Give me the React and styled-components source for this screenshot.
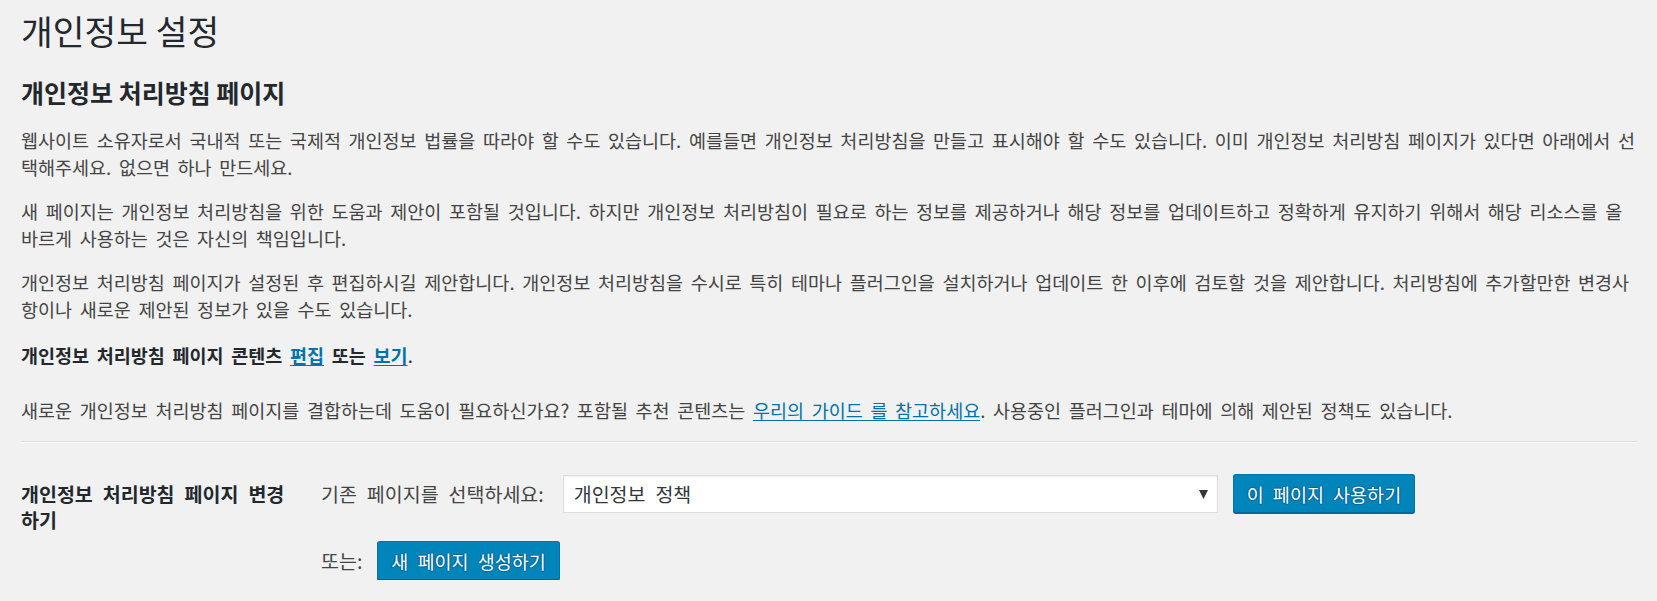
import React from "react";
import styled, { createGlobalStyle } from "styled-components";

const GlobalStyle = createGlobalStyle`
  html, body {
    margin: 0;
    padding: 0;
    background: #f1f1f1;
  }
  body {
    font-family: "Noto Sans CJK KR", "Noto Sans", sans-serif;
    color: #444;
  }
`;

const Wrap = styled.div`
  padding: 10px 20px 0 21px;
`;

const Title = styled.h1`
  margin: 0;
  font-size: 34.5px;
  font-weight: 400;
  line-height: 40px;
  color: #23282d;
`;

const SectionTitle = styled.h2`
  margin: 27px 0 20px;
  font-size: 25px;
  font-weight: 700;
  line-height: 30px;
  color: #23282d;
`;

const Para = styled.p`
  margin: 0 0 18px;
  font-size: 18.5px;
  line-height: 26.5px;
  word-spacing: 3.5px;
  color: #444;
`;

const EditLine = styled(Para)`
  margin: 20px 0 28px;
  color: #23282d;
  strong {
    font-weight: 700;
  }
`;

const Link = styled.a`
  color: #0073aa;
  text-decoration: underline;
  text-underline-offset: 2px;
`;

const Divider = styled.hr`
  margin: 13px 0 0;
  border: 0;
  border-top: 1px solid #ddd;
  border-bottom: 1px solid #fafafa;
`;

const FormRow = styled.div`
  display: flex;
  align-items: flex-start;
`;

const RowLabel = styled.div`
  width: 272px;
  flex-shrink: 0;
  padding: 38px 14px 0 0;
  font-size: 19.5px;
  font-weight: 700;
  line-height: 26px;
  word-spacing: 5.6px;
  color: #23282d;
`;

const RowBody = styled.div`
  display: flex;
  flex-direction: column;
  gap: 28px;
  padding: 31px 0 0 14px;
`;

const Field = styled.div`
  display: flex;
  align-items: center;
  gap: ${(p) => p.$gap || 19}px;
`;

const FieldText = styled.span`
  font-size: 19.5px;
  word-spacing: 5.6px;
  color: #444;
`;

const Select = styled.div`
  box-sizing: border-box;
  width: 655px;
  height: 38px;
  margin-right: -4px;
  display: flex;
  align-items: center;
  justify-content: space-between;
  padding: 0 9px 0 10px;
  background: #fff;
  border: 1px solid #ddd;
  box-shadow: inset 0 1px 2px rgba(0, 0, 0, 0.07);
  font-size: 19.5px;
  word-spacing: 5.6px;
  color: #32373c;
`;

const Button = styled.button`
  box-sizing: border-box;
  height: 39px;
  padding: 0 13px;
  font-family: inherit;
  font-size: 18.5px;
  word-spacing: 5px;
  color: #fff;
  background: #0085ba;
  border: 1px solid #0073aa;
  border-bottom-color: #006799;
  border-radius: 3px;
  box-shadow: 0 1px 0 #006799;
  text-shadow: 0 -1px 1px #006799, 1px 0 1px #006799, 0 1px 1px #006799,
    -1px 0 1px #006799;
  cursor: pointer;
`;

function Arrow() {
  return (
    <svg width="9" height="10" viewBox="0 0 9 10">
      <path d="M0 1h9L4.5 10z" fill="#32373c" />
    </svg>
  );
}

export default function App() {
  return (
    <>
      <GlobalStyle />
      <Wrap>
        <Title>개인정보 설정</Title>
        <SectionTitle>개인정보 처리방침 페이지</SectionTitle>
        <Para>
          웹사이트 소유자로서 국내적 또는 국제적 개인정보 법률을 따라야 할 수도 있습니다. 예를들면 개인정보
          처리방침을 만들고 표시해야 할 수도 있습니다. 이미 개인정보 처리방침 페이지가 있다면 아래에서
          선택해주세요. 없으면 하나 만드세요.
        </Para>
        <Para>
          새 페이지는 개인정보 처리방침을 위한 도움과 제안이 포함될 것입니다. 하지만 개인정보 처리방침이
          필요로 하는 정보를 제공하거나 해당 정보를 업데이트하고 정확하게 유지하기 위해서 해당 리소스를
          올바르게 사용하는 것은 자신의 책임입니다.
        </Para>
        <Para>
          개인정보 처리방침 페이지가 설정된 후 편집하시길 제안합니다. 개인정보 처리방침을 수시로 특히
          테마나 플러그인을 설치하거나 업데이트 한 이후에 검토할 것을 제안합니다. 처리방침에 추가할만한
          변경사항이나 새로운 제안된 정보가 있을 수도 있습니다.
        </Para>
        <EditLine>
          <strong>
            개인정보 처리방침 페이지 콘텐츠 <Link href="#">편집</Link> 또는 <Link href="#">보기</Link>
          </strong>
          .
        </EditLine>
        <Para>
          새로운 개인정보 처리방침 페이지를 결합하는데 도움이 필요하신가요? 포함될 추천 콘텐츠는{" "}
          <Link href="#">우리의 가이드 를 참고하세요</Link>. 사용중인 플러그인과 테마에 의해 제안된 정책도
          있습니다.
        </Para>
        <Divider />
        <FormRow>
          <RowLabel>개인정보 처리방침 페이지 변경하기</RowLabel>
          <RowBody>
            <Field>
              <FieldText>기존 페이지를 선택하세요:</FieldText>
              <Select>
                <span>개인정보 정책</span>
                <Arrow />
              </Select>
              <Button type="button">이 페이지 사용하기</Button>
            </Field>
            <Field $gap={15}>
              <FieldText>또는:</FieldText>
              <Button type="button">새 페이지 생성하기</Button>
            </Field>
          </RowBody>
        </FormRow>
      </Wrap>
    </>
  );
}
